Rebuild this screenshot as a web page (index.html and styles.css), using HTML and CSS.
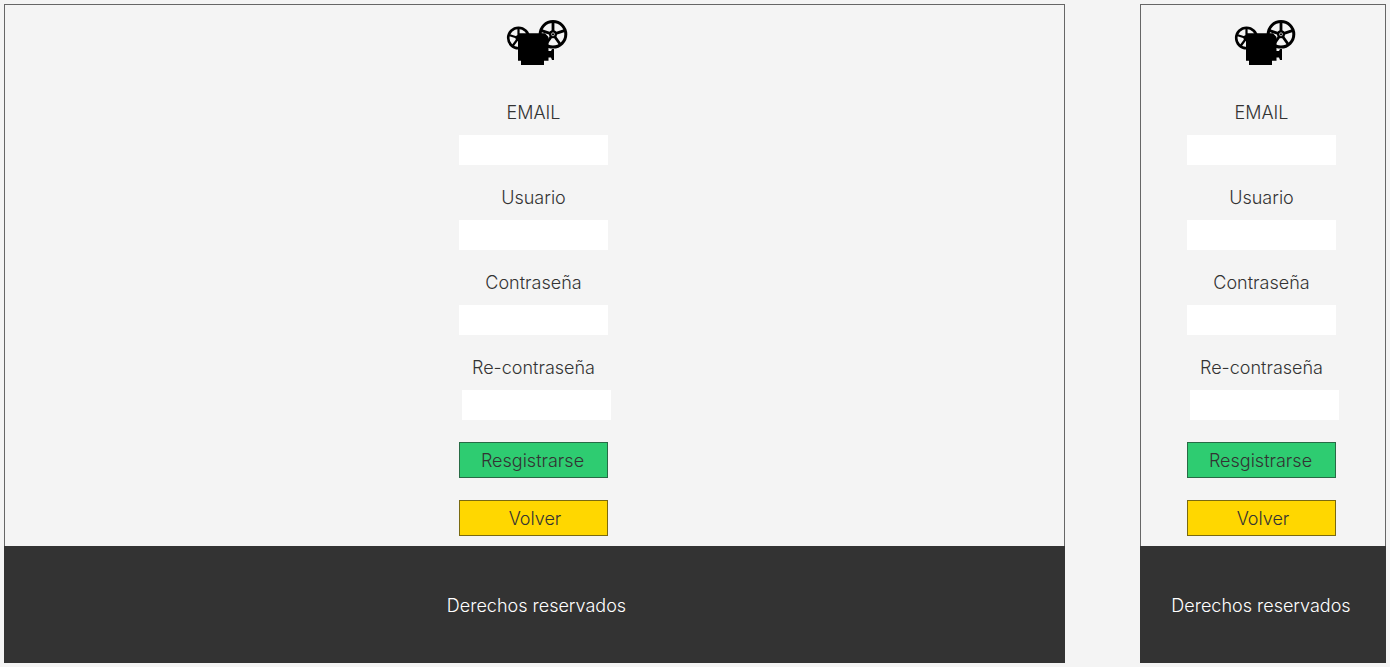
FILE: index.html
```
<!DOCTYPE html>
<html lang="es">
<head>
<meta charset="utf-8">
<title>Registro</title>
<link rel="stylesheet" href="styles.css">
</head>
<body>
<svg class="sprite" aria-hidden="true">
  <symbol id="projector" viewBox="0 0 62 46">
    <g fill="none" stroke="#000">
      <circle cx="12.5" cy="18" r="10.3" stroke-width="2.6"/>
      <path stroke-width="2.2" d="M12.5 18V8M12.500 18L3 15M12.500 18L6.500 26M12.500 18L22 15"/>
      <circle cx="47" cy="14.300" r="12.800" stroke-width="3"/>
      <path stroke-width="2.800" d="M47 14.300V2M47 14.300L58.400 10.600M47 14.300L54 24M47 14.300L40 24M47 14.300L35.600 10.600"/>
    </g>
    <circle cx="12.500" cy="18" r="3"/>
    <circle cx="47" cy="14.300" r="4"/>
    <circle cx="47" cy="14.300" r="1.500" fill="none" stroke="#ddd" stroke-width=".8"/>
    <path d="M12 13.300H39L42.500 17V31H45L46 29H48V40H46L45 37.500H42.500V40.700H38V45H15V40.700H12Z"/>
  </symbol>
</svg>
<main class="screens">
  <section class="screen screen-wide">
    <form class="form">
      <svg class="logo" role="img" aria-label="Proyector"><use href="#projector"/></svg>
      <label class="label" for="email-w">EMAIL</label>
      <input class="field" id="email-w" type="email">
      <label class="label" for="user-w">Usuario</label>
      <input class="field" id="user-w" type="text">
      <label class="label" for="pass-w">Contraseña</label>
      <input class="field" id="pass-w" type="password">
      <label class="label" for="repass-w">Re-contraseña</label>
      <input class="field field-repeat" id="repass-w" type="password">
      <button class="button button-register" type="submit">Resgistrarse</button>
      <button class="button button-back" type="button">Volver</button>
    </form>
    <footer class="footer">Derechos reservados</footer>
  </section>
  <section class="screen screen-narrow">
    <form class="form">
      <svg class="logo" role="img" aria-label="Proyector"><use href="#projector"/></svg>
      <label class="label" for="email-n">EMAIL</label>
      <input class="field" id="email-n" type="email">
      <label class="label" for="user-n">Usuario</label>
      <input class="field" id="user-n" type="text">
      <label class="label" for="pass-n">Contraseña</label>
      <input class="field" id="pass-n" type="password">
      <label class="label" for="repass-n">Re-contraseña</label>
      <input class="field field-repeat" id="repass-n" type="password">
      <button class="button button-register" type="submit">Resgistrarse</button>
      <button class="button button-back" type="button">Volver</button>
    </form>
    <footer class="footer">Derechos reservados</footer>
  </section>
</main>
</body>
</html>
```
FILE: styles.css
```
* {
  box-sizing: border-box;
}

body {
  margin: 0;
  background: #f4f4f4;
  color: #333;
  font: 300 18px/24px Inter, "Liberation Sans", sans-serif;
}

.sprite {
  position: absolute;
  width: 0;
  height: 0;
}

.screens {
  display: flex;
  gap: 75px;
  padding: 4px;
}

.screen {
  border: 1px solid #666;
  border-bottom: 0;
}

.screen-wide {
  flex: 1;
}

.screen-narrow {
  flex: 0 0 246px;
}

.form {
  display: flex;
  flex-direction: column;
  align-items: center;
  padding: 15px 2px 10px 0;
}

.logo {
  width: 62px;
  height: 46px;
  margin-bottom: 15px;
  margin-left: 6px;
}

.label {
  margin: 20px 0 10px;
}

.field {
  width: 149px;
  height: 30px;
  margin-bottom: 1px;
  padding: 0 8px;
  border: 0;
  background: #fff;
  font: inherit;
}

.field-repeat {
  margin-bottom: 0;
  margin-left: 6px;
}

.button {
  width: 149px;
  height: 36px;
  margin-top: 22px;
  padding: 1px 0 0;
  border: 1px solid #333;
  color: #333;
  font: inherit;
}

.button-register {
  padding-right: 2px;
  background: #2ecc71;
  border-color: #276b45;
}

.button-back {
  padding-left: 3px;
  background: #ffd700;
  border-color: #7a6a10;
}

.footer {
  margin: 0 -1px;
  padding: 48px 0 45px 4px;
  background: #333;
  color: #fff;
  text-align: center;
}

.screen-narrow .form {
  padding-right: 3px;
}

.screen-narrow .footer {
  padding-right: 4px;
  padding-left: 0;
}
```
